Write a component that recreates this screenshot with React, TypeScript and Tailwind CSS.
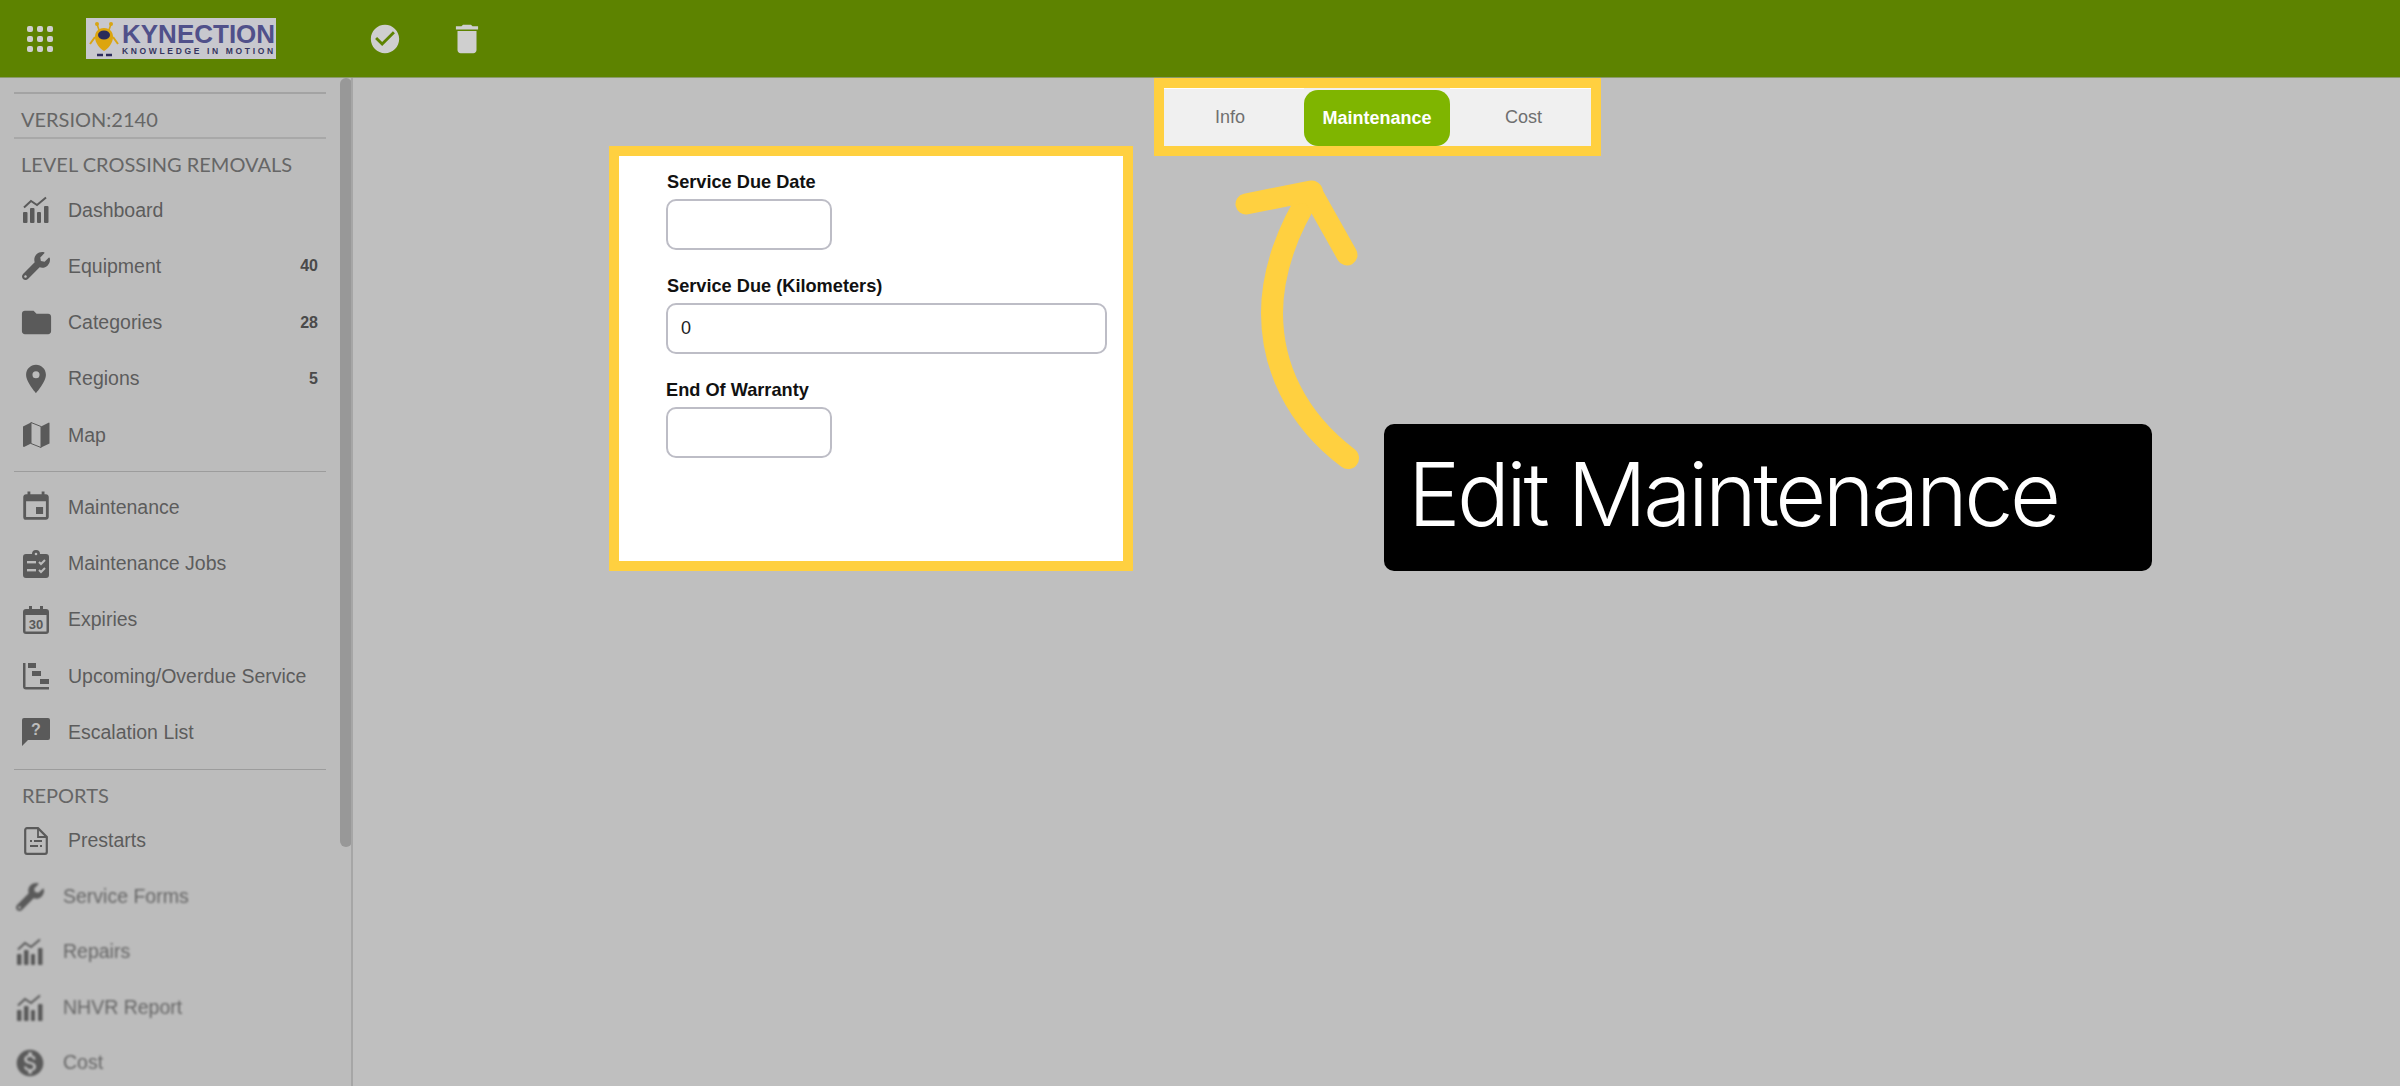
import type { ReactNode } from 'react';
import { FaWrench } from 'react-icons/fa';
import { MdFolder, MdPlace, MdEvent, MdMonetizationOn, MdCheckCircle, MdDelete } from 'react-icons/md';

const ChartIcon = ({ className }: { className?: string }) => (
    <svg viewBox="0 0 28 28" className={className} fill="currentColor">
        <path d="M2 11.5 9 5l6 4 9-7.5" fill="none" stroke="currentColor" strokeWidth="2" />
        <rect x="1" y="16" width="4.5" height="11" rx="1" />
        <rect x="8" y="12" width="4.5" height="15" rx="1" />
        <rect x="15" y="16" width="4" height="11" rx="1" />
        <rect x="22" y="10" width="4.5" height="17" rx="1" />
    </svg>
);

const MapIcon = ({ className }: { className?: string }) => (
    <svg viewBox="0 0 28 28" className={className}>
        <path d="M1 5.5 9 1.5v21l-7 3.5-1-.5Z" fill="currentColor" />
        <path d="M19 5.5 27 1.5l.5.5v20.5l-8.5 4Z" fill="currentColor" />
        <path d="M9 1.5 19 5.5v21l-10-4Z" fill="none" stroke="currentColor" strokeWidth="1" />
    </svg>
);

const JobsIcon = ({ className }: { className?: string }) => (
    <svg viewBox="0 0 26 28" className={className} fill="currentColor">
        <path d="M3 4h6a4 4 0 0 1 8 0h6a3 3 0 0 1 3 3v18a3 3 0 0 1-3 3H3a3 3 0 0 1-3-3V7a3 3 0 0 1 3-3Z" />
        <circle cx="13" cy="4" r="1.3" fill="#bcbcbc" />
        <rect x="4" y="11" width="9" height="2.4" fill="#bcbcbc" />
        <rect x="4" y="19" width="9" height="2.4" fill="#bcbcbc" />
        <path d="m16 12 2 2 4-4M16 20l2 2 4-4" fill="none" stroke="#bcbcbc" strokeWidth="2" />
    </svg>
);

const ExpiryIcon = ({ className }: { className?: string }) => (
    <svg viewBox="0 0 26 28" className={className}>
        <path d="M3 3h3V0h3v3h8V0h3v3h3a3 3 0 0 1 3 3v19a3 3 0 0 1-3 3H3a3 3 0 0 1-3-3V6a3 3 0 0 1 3-3Z" fill="currentColor" />
        <rect x="2.5" y="9" width="21" height="16.5" fill="#bcbcbc" />
        <text x="13" y="23" textAnchor="middle" fontSize="13" fontWeight="700" fill="currentColor" fontFamily="'Liberation Sans', sans-serif">30</text>
    </svg>
);

const GanttIcon = ({ className }: { className?: string }) => (
    <svg viewBox="0 0 26 28" className={className} fill="currentColor">
        <path d="M0 1h2.5v24H26v2.5H3a3 3 0 0 1-3-3Z" />
        <rect x="5" y="1" width="8" height="5" />
        <rect x="9" y="9" width="9" height="5" />
        <rect x="17" y="17" width="9" height="5" />
    </svg>
);

const HelpBubbleIcon = ({ className }: { className?: string }) => (
    <svg viewBox="0 0 28 28" className={className}>
        <path d="M2 0h24a2 2 0 0 1 2 2v18a2 2 0 0 1-2 2H6l-6 6V2a2 2 0 0 1 2-2Z" fill="currentColor" />
        <text x="14" y="17" textAnchor="middle" fontSize="16" fontWeight="700" fill="#bcbcbc" fontFamily="'Liberation Sans', sans-serif">?</text>
    </svg>
);

const DocIcon = ({ className }: { className?: string }) => (
    <svg viewBox="0 0 24 28" className={className}>
        <path d="M3 1.2h11l8.8 8.8v15a1.8 1.8 0 0 1-1.8 1.8H3A1.8 1.8 0 0 1 1.2 25V3A1.8 1.8 0 0 1 3 1.2Z" fill="none" stroke="currentColor" strokeWidth="2.2" />
        <path d="M14 1v9h9" fill="none" stroke="currentColor" strokeWidth="1.8" />
        <path d="M6 14h2M10 14h8M6 19h8M16 19h2" stroke="currentColor" strokeWidth="2.2" />
    </svg>
);

const GridIcon = () => (
    <svg viewBox="0 0 26 26" className="w-[26px] h-[26px]" fill="#cfcfcf">
        {[0, 10, 20].flatMap((y) =>
            [0, 10, 20].map((x) => <rect key={`${x}-${y}`} x={x} y={y} width="6" height="6" rx="2" />)
        )}
    </svg>
);

const RobotLogo = () => (
    <svg viewBox="0 0 32 38" className="w-[32px] h-[38px] shrink-0">
        <path d="M11 10 9 4M21 10l2-6" stroke="#d8a514" strokeWidth="1.6" fill="none" />
        <circle cx="9" cy="4" r="2" fill="#d8a514" />
        <circle cx="23" cy="4" r="2" fill="#d8a514" />
        <path d="M16 8c6 0 9 4 9 9 0 6-5 12-9 14-4-2-9-8-9-14 0-5 3-9 9-9Z" fill="#dca50f" />
        <ellipse cx="16" cy="15" rx="6" ry="4.5" fill="#2b2b5a" />
        <path d="M7 17 2 24M25 17l5 7" stroke="#d8a514" strokeWidth="2" fill="none" />
        <path d="M9 35h6M18 35h6" stroke="#2b2b5a" strokeWidth="2.5" />
    </svg>
);

const icon = 'w-[28px] h-[28px]';

type NavItem = { label: string; icon: ReactNode; badge?: number; blurred?: boolean };

const mainNav: NavItem[] = [
    { label: 'Dashboard', icon: <ChartIcon className={icon} /> },
    { label: 'Equipment', icon: <FaWrench className={icon} />, badge: 40 },
    { label: 'Categories', icon: <MdFolder className="w-[35px] h-[35px] shrink-0" />, badge: 28 },
    { label: 'Regions', icon: <MdPlace className="w-[34px] h-[34px] shrink-0" />, badge: 5 },
    { label: 'Map', icon: <MapIcon className={icon} /> },
];

const maintenanceNav: NavItem[] = [
    { label: 'Maintenance', icon: <MdEvent className="w-[34px] h-[34px] shrink-0" /> },
    { label: 'Maintenance Jobs', icon: <JobsIcon className={icon} /> },
    { label: 'Expiries', icon: <ExpiryIcon className={icon} /> },
    { label: 'Upcoming/Overdue Service', icon: <GanttIcon className={icon} /> },
    { label: 'Escalation List', icon: <HelpBubbleIcon className={icon} /> },
];

const reportNav: NavItem[] = [
    { label: 'Service Forms', icon: <FaWrench className={icon} />, blurred: true },
    { label: 'Repairs', icon: <ChartIcon className={icon} />, blurred: true },
    { label: 'NHVR Report', icon: <ChartIcon className={icon} />, blurred: true },
    { label: 'Cost', icon: <MdMonetizationOn className="w-[32px] h-[32px] shrink-0" />, blurred: true },
];

function NavRow({ item }: { item: NavItem }) {
    if (item.blurred) {
        return (
            <div className="flex items-center h-[55.5px] pl-[15px] pr-[22px] blur-[1px] text-[#5a5a5a]">
                <span className="w-[30px] flex justify-center shrink-0">{item.icon}</span>
                <span className="ml-[18px] text-[19.5px] text-[#666] whitespace-nowrap">{item.label}</span>
            </div>
        );
    }
    return (
        <div className="flex items-center h-[56.25px] pl-[22px] pr-[22px] text-[#5a5a5a]">
            <span className="w-[28px] flex justify-center shrink-0">{item.icon}</span>
            <span className="ml-[18px] text-[19.5px] text-[#5c5c5c] whitespace-nowrap">{item.label}</span>
            {item.badge !== undefined && (
                <span className="ml-auto text-[16px] font-bold text-[#4a4a4a]">{item.badge}</span>
            )}
        </div>
    );
}

function Field({ label, value, wide, flush }: { label: string; value?: string; wide?: boolean; flush?: boolean }) {
    return (
        <div className="flex flex-col">
            <label className={`text-[18.2px] leading-[20px] font-bold text-[#111] ${flush ? '' : 'ml-px'}`}>{label}</label>
            <div
                className={`mt-[7px] h-[51px] rounded-[10px] border-2 border-[#bdbdc6] bg-white flex items-center pl-[13px] text-[18px] text-[#222] ${wide ? 'w-[441px]' : 'w-[166px]'}`}
            >
                {value}
            </div>
        </div>
    );
}

export default function App() {
    return (
        <div className="relative w-[2400px] h-[1086px] overflow-hidden flex flex-col bg-[#bfbfbf] font-['Liberation_Sans',Arial,sans-serif]">
            {/* Top bar */}
            <header className="h-[78px] shrink-0 bg-[#5d8300] flex items-center border-b border-[#8a9a6a]">
                <div className="w-[86px] pl-[27px] shrink-0">
                    <GridIcon />
                </div>
                <div className="w-[190px] h-[41px] bg-[#c8c8ce] flex items-center overflow-hidden pl-[2px] shrink-0">
                    <RobotLogo />
                    <div className="flex flex-col ml-[2px]">
                        <span className="text-[26px] leading-[25px] font-bold text-[#50508a] whitespace-nowrap">KYNECTION</span>
                        <span className="text-[8.5px] leading-[9px] font-bold text-[#35355f] tracking-[2.65px] whitespace-nowrap">KNOWLEDGE IN MOTION</span>
                    </div>
                </div>
                <MdCheckCircle className="w-[34px] h-[34px] ml-[92px] text-[#cfcfcf]" />
                <MdDelete className="w-[38px] h-[38px] ml-[46px] text-[#cfcfcf]" />
            </header>

            <div className="flex flex-1 min-h-0">
                {/* Sidebar */}
                <aside className="w-[353px] shrink-0 relative bg-[#bcbcbc] border-r-2 border-[#a6a6a6] overflow-hidden">
                    <div className="pt-[14px] w-[340px]">
                        <div className="mx-[14px] h-[2px] bg-[#a3a3a3]" />
                        <div className="h-[43px] flex items-center pt-[7px] pl-[7px] mx-[14px] font-['Lato',sans-serif] text-[20px] text-[#666]">
                            VERSION:2140
                        </div>
                        <div className="mx-[14px] h-[2px] bg-[#a8a8a8]" />
                        <div className="h-[43px] flex items-center pt-[7px] pl-[21px] font-['Lato',sans-serif] text-[20px] text-[#666] whitespace-nowrap">
                            LEVEL CROSSING REMOVALS
                        </div>
                        {mainNav.map((item) => (
                            <NavRow key={item.label} item={item} />
                        ))}
                        <div className="mx-[14px] mt-[8px] mb-[7px] h-[1px] bg-[#9c9c9c]" />
                        {maintenanceNav.map((item) => (
                            <NavRow key={item.label} item={item} />
                        ))}
                        <div className="mx-[14px] mt-[8px] h-[1px] bg-[#9c9c9c]" />
                        <div className="h-[43px] flex items-center pt-[7px] pl-[22px] font-['Lato',sans-serif] text-[20px] text-[#666]">
                            REPORTS
                        </div>
                        <NavRow item={{ label: 'Prestarts', icon: <DocIcon className={icon} /> }} />
                        {reportNav.map((item) => (
                            <NavRow key={item.label} item={item} />
                        ))}
                    </div>
                    {/* Scrollbar thumb */}
                    <div className="absolute top-0 left-[340px] w-[12px] h-[769px] rounded-[6px] bg-[#989898]" />
                </aside>

                {/* Content */}
                <main className="flex-1 min-w-0 flex items-start pl-[256px]">
                    <section className="mt-[68px] w-[524px] h-[425px] border-[10px] border-[#ffd040] bg-white pl-[47px] pt-[16px] flex flex-col gap-[26px]">
                        <Field label="Service Due Date" />
                        <Field label="Service Due (Kilometers)" value="0" wide />
                        <Field label="End Of Warranty" flush />
                    </section>
                    <nav className="ml-[21px] w-[447px] h-[78px] border-[10px] border-[#ffd040] bg-[#f0f0f0] flex items-stretch">
                        <div className="w-[140px] flex items-center justify-center pr-[8px] text-[18px] text-[#6f6f6f] border-t border-white">Info</div>
                        <div className="w-[146px] mt-[2px] rounded-[14px] bg-[#7fb500] flex items-center justify-center text-[18px] font-bold text-white">Maintenance</div>
                        <div className="flex-1 flex items-center justify-center pl-[6px] text-[18px] text-[#6f6f6f] border-t border-white">Cost</div>
                    </nav>
                </main>
            </div>

            {/* Annotation arrow */}
            <svg className="absolute left-[1230px] top-[175px] w-[130px] h-[300px]" viewBox="1230 175 130 300" fill="none" stroke="#ffd040" strokeLinecap="round" strokeLinejoin="round">
                <path d="M1348 458C1295 418 1272 365 1272 313C1272 272 1288 228 1312 192" strokeWidth="22" />
                <path d="M1246 204L1311 191L1347 255" strokeWidth="21" />
            </svg>

            {/* Annotation callout */}
            <div className="absolute left-[1384px] top-[424px] w-[768px] h-[147px] rounded-[10px] bg-black flex items-center pl-[24px] pb-[8px] font-['Inter',sans-serif] font-light text-[88px] tracking-[-3.5px] leading-none text-white whitespace-nowrap">
                Edit Maintenance
            </div>
        </div>
    );
}
